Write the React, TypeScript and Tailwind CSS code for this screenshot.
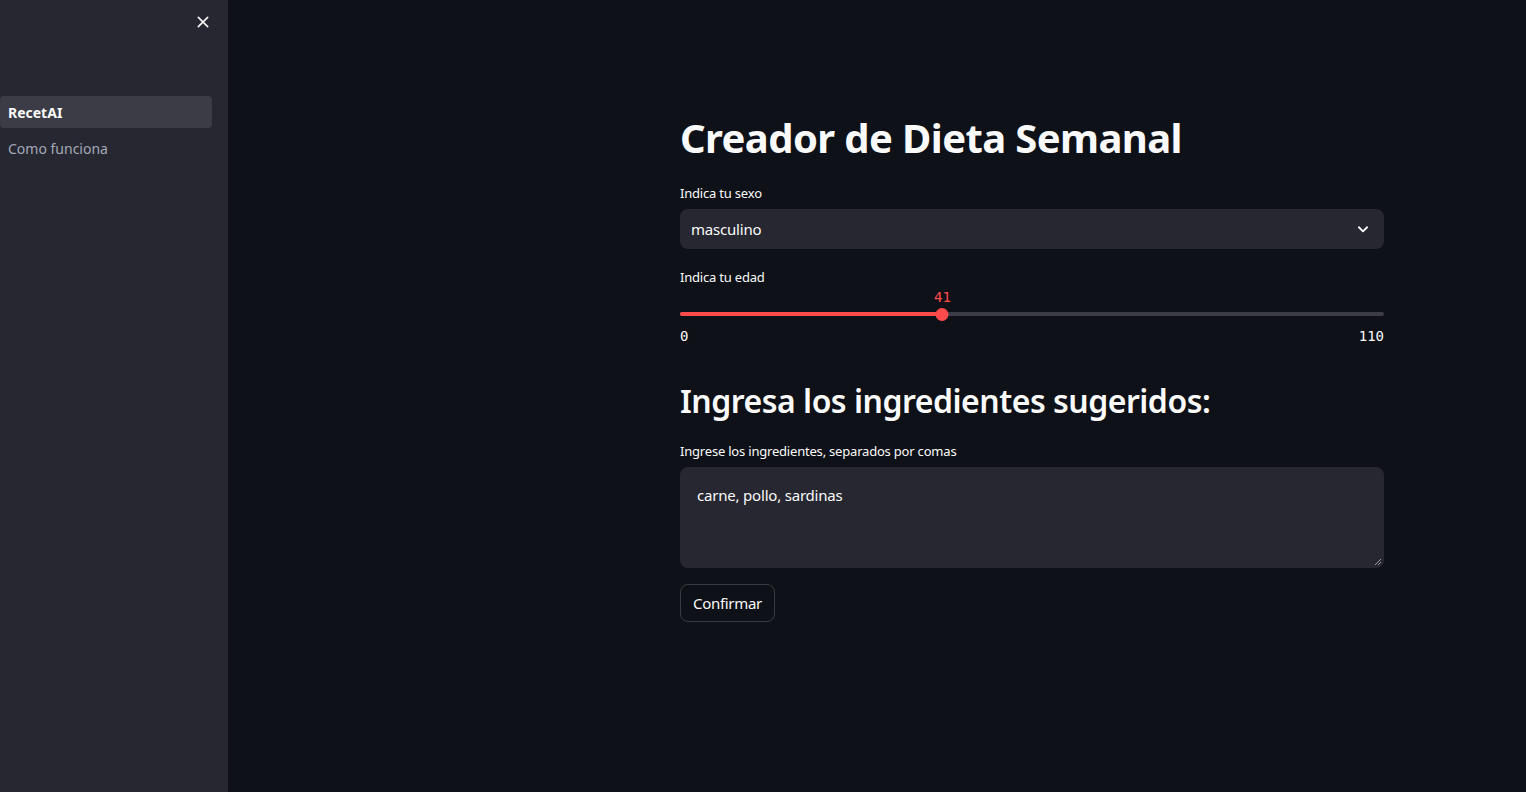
import React from "react";

export default function App() {
  const pct = (41 / 110) * 100;
  return (
    <div className="flex h-[792px] w-full overflow-hidden bg-[#0e1117] font-['Noto_Sans',sans-serif] text-[#fafafa]">
      <aside className="flex w-[228px] shrink-0 flex-col bg-[#262730]">
        <div className="flex justify-end pr-[17px] pt-[14px]">
          <svg width="16" height="16" viewBox="0 0 24 24" fill="none" stroke="#fafafa" strokeWidth="2.4" strokeLinecap="round">
            <path d="M5 5l14 14M19 5L5 19" />
          </svg>
        </div>
        <nav className="mt-[66px] flex flex-col gap-[4px] pr-4">
          <div className="flex h-[32px] items-center rounded-[4px] bg-[#3b3c45] px-2 text-[14px] font-bold text-[#fafafa]">
            RecetAI
          </div>
          <div className="flex h-[32px] items-center px-2 text-[14px] text-[#a3a8b8]">Como funciona</div>
        </nav>
      </aside>
      <main className="flex-1 pl-[452px] pr-[142px] pt-[110px]">
        <h1 className="text-[40px] font-bold leading-[56px] tracking-[-0.6px]">Creador de Dieta Semanal</h1>
        <div className="mt-[17px] text-[13px] leading-[20px] tracking-[-0.2px]">Indica tu sexo</div>
        <div className="mt-[6px] flex h-[40px] items-center justify-between rounded-[8px] bg-[#262730] pl-[11px] pr-[14px] text-[15px]">
          <span className="tracking-[-0.2px]">masculino</span>
          <svg width="14" height="14" viewBox="0 0 24 24" fill="none" stroke="#fafafa" strokeWidth="3.2" strokeLinecap="round" strokeLinejoin="round">
            <path d="M5 9l7 7 7-7" />
          </svg>
        </div>
        <div className="mt-[18px] text-[13px] leading-[20px] tracking-[-0.2px]">Indica tu edad</div>
        <div className="relative mt-[20px] h-[51px]">
          <div className="absolute top-[5px] h-[4px] w-full rounded-full bg-[#3b3c45]" />
          <div className="absolute top-[5px] h-[4px] rounded-full bg-[#ff4b4b]" style={{ width: `${pct}%` }} />
          <div className="absolute top-[0.5px] h-[13px] w-[13px] -translate-x-1/2 rounded-full bg-[#ff4b4b]" style={{ left: `${pct}%` }} />
          <div className="absolute top-[-19px] -translate-x-1/2 font-['DejaVu_Sans_Mono',monospace] text-[14px] leading-[18px] text-[#ff4b4b]" style={{ left: `${pct}%` }}>
            41
          </div>
          <div className="absolute left-0 top-[20px] font-['DejaVu_Sans_Mono',monospace] text-[14px] leading-[18px] text-[#fafafa]">0</div>
          <div className="absolute right-0 top-[20px] font-['DejaVu_Sans_Mono',monospace] text-[14px] leading-[18px] text-[#fafafa]">110</div>
        </div>
        <h2 className="mt-[19px] text-[32px] font-semibold leading-[48px] tracking-[-0.5px]">Ingresa los ingredientes sugeridos:</h2>
        <div className="mt-[16px] text-[13px] leading-[20px] tracking-[-0.2px]">Ingrese los ingredientes, separados por comas</div>
        <div className="relative mt-[6px] h-[101px] rounded-[8px] bg-[#262730] px-[17px] pt-[17px] text-[15px] leading-[22px] tracking-[-0.2px]">
          carne, pollo, sardinas
          <svg className="absolute bottom-[2px] right-[2px]" width="8" height="8" viewBox="0 0 8 8" stroke="#9a9aa0" strokeWidth="1">
            <path d="M7 1L1 7M7 4L4 7" />
          </svg>
        </div>
        <button className="mt-[16px] flex h-[38px] items-center rounded-[8px] border border-[#3a3b42] px-[12px] text-[15px] tracking-[-0.3px] text-[#fafafa]">
          Confirmar
        </button>
      </main>
    </div>
  );
}
